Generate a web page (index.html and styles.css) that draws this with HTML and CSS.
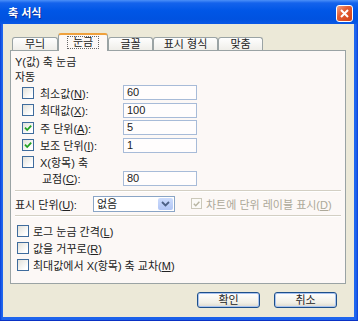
FILE: index.html
```html
<!DOCTYPE html>
<html lang="ko"><head>
<meta charset="utf-8">
<title>축 서식</title>
<link rel="stylesheet" href="styles.css">
</head><body>

<div class="window">
  <div class="titlebar">
    <span class="title">축 서식</span>
    <span class="close"><svg viewBox="0 0 15 15" width="15" height="15"><path d="M4 4 L11 11 M11 4 L4 11" stroke="#fff" stroke-width="2"/></svg></span>
  </div>

  <div class="client">
    <div class="tabs">
      <span class="tab t46">무늬</span>
      <span class="tab t50 sel"><span class="focus">눈금</span></span>
      <span class="tab t45">글꼴</span>
      <span class="tab t65">표시 형식</span>
      <span class="tab t45">맞춤</span>
    </div>

    <div class="panel">
      <div class="head">Y(값) 축 눈금</div>
      <div class="head h2">자동</div>

      <div class="row"><span class="cb"></span><label>최소값(<u>N</u>):</label><span class="edit">60</span></div>
      <div class="row"><span class="cb"></span><label>최대값(<u>X</u>):</label><span class="edit">100</span></div>
      <div class="row"><span class="cb"><svg viewBox="0 0 10 10" width="10" height="10"><path d="M2 4.6 L4.2 7 L8.2 2.6" fill="none" stroke="#21a121" stroke-width="1.8"/></svg></span><label>주 단위(<u>A</u>):</label><span class="edit">5</span></div>
      <div class="row"><span class="cb"><svg viewBox="0 0 10 10" width="10" height="10"><path d="M2 4.6 L4.2 7 L8.2 2.6" fill="none" stroke="#21a121" stroke-width="1.8"/></svg></span><label>보조 단위(<u>I</u>):</label><span class="edit">1</span></div>
      <div class="row xrow"><span class="cb"></span><label>X(항목) 축</label></div>
      <div class="row cross"><label>교점(<u>C</u>):</label><span class="edit">80</span></div>

      <div class="sep"></div>

      <div class="unitrow">
        <label>표시 단위(<u>U</u>):</label>
        <span class="select"><span class="value">없음</span><span class="drop"><svg viewBox="0 0 9 6" width="9" height="6"><path d="M1 1 L4.5 4.5 L8 1" fill="none" stroke="#4d6185" stroke-width="1.8"/></svg></span></span>
        <span class="cb dis"><svg viewBox="0 0 10 10" width="10" height="10"><path d="M2 4.6 L4.2 7 L8.2 2.6" fill="none" stroke="#b8b5a2" stroke-width="1.6"/></svg></span>
        <span class="distext">차트에 단위 레이블 표시(<u>D</u>)</span>
      </div>

      <div class="sep"></div>

      <div class="opt first"><span class="cb"></span><span>로그 눈금 간격(<u>L</u>)</span></div>
      <div class="opt"><span class="cb"></span><span>값을 거꾸로(<u>R</u>)</span></div>
      <div class="opt"><span class="cb"></span><span>최대값에서 X(항목) 축 교차(<u>M</u>)</span></div>
    </div>

    <div class="buttons">
      <span class="btn">확인</span>
      <span class="btn">취소</span>
    </div>
  </div>
</div>

</body></html>
```

FILE: styles.css
```css
* { box-sizing: border-box; }

body {
  margin: 0;
  font-family: "Liberation Sans", "Noto Sans CJK KR", sans-serif;
  font-size: 11px; color: #222;
  background: #fff;
}

u { text-decoration: underline; text-underline-offset: 1px; }

.window {
  width: 358px; height: 321px;
  display: flex; flex-direction: column;
  background: linear-gradient(to right, #0a3fd6, #1f66ee 2px, #1a5fe9 50%, #1f66ee calc(100% - 2px), #0a3fd6);
  border-bottom: 1px solid #0a32c4;
}

.titlebar {
  height: 24px; flex: none;
  display: flex; align-items: center;
  padding: 0 5px 0 8px;
  background: linear-gradient(#4c90f8 0, #1463ec 3px, #0056e6 45%, #0052e0 80%, #0a58e6 100%);
}

.title {
  flex: 1; color: #fff; font-weight: bold; font-size: 11px;
  text-shadow: 1px 1px #0b2d9e;
}

.close {
  width: 17px; height: 17px; margin-top: 2px;
  border: 1px solid #fff; border-radius: 3px;
  display: flex; align-items: center; justify-content: center;
  background: linear-gradient(135deg, #f3a286, #e35d33 40%, #cf4119);
}

.client {
  flex: 1;
  margin: 0 4px 3px 3px;
  background: #ece9d8;
  display: flex; flex-direction: column;
}

/* tab strip */
.tabs {
  height: 26px; flex: none;
  display: flex; align-items: flex-end;
  padding-left: 9px;
  position: relative; z-index: 1;
}

.tab {
  height: 13px;
  border: 1px solid #9aa3a4; border-bottom: none;
  border-radius: 3px 3px 0 0;
  background: linear-gradient(#fefefe, #efeee9);
  text-align: center; line-height: 12px;
  color: #222;
}

.t45 { width: 45px; }
.t46 { width: 46px; }
.t50 { width: 50px; }
.t65 { width: 65px; }

.tab.sel {
  height: 18px; margin-bottom: -1px;
  border-top: 2px solid #efa13c;
  background: #fcf8f6;
  padding-top: 1px;
}

.focus {
  display: inline-block;
  border: 1px dotted #666;
  padding: 0 5px; line-height: 11px;
}

/* page */
.panel {
  margin: 0 8px 0 7px;
  height: 234px; flex: none;
  border: 1px solid #9aa3a4;
  background: #fcf8f6;
  padding: 3px 4px 0 4px;
}

.head { line-height: 16px; height: 16px; }
.head.h2 { height: 14px; line-height: 14px; }

.row {
  display: flex; align-items: center;
  height: 17.5px; margin-left: 7px;
}

.row label { margin-left: 6px; width: 83px; }
.row.xrow { height: 15px; }
.row.cross { height: 18px; }
.row.cross label { margin-left: 20px; width: 81px; }

.edit {
  width: 74px; height: 15px;
  border: 1px solid #a7bbd8;
  background: #fffdfd;
  padding-left: 3px; line-height: 13px;
}

.cb {
  width: 12px; height: 12px; flex: none;
  border: 1px solid #3f6c9d;
  background: linear-gradient(135deg, #e2e1da, #fff 80%);
  display: flex; align-items: center; justify-content: center;
}

.cb.dis {
  width: 11px; height: 11px;
  border-color: #cbc8ba; background: #fbfaf7;
  margin-left: 16px;
}

.sep {
  height: 2px;
  border-top: 1px solid #d3cfc3;
  border-bottom: 1px solid #fff;
}

.row.cross + .sep { margin-top: 3px; }

.unitrow {
  display: flex; align-items: center;
  height: 23px;
}

.unitrow label { width: 78px; }

.select {
  width: 82px; height: 16px;
  border: 1px solid #8aa5c6;
  background: #fff;
  display: flex;
}

.select .value { flex: 1; padding-left: 3px; line-height: 14px; }

.drop {
  width: 15px; margin: 1px;
  border-radius: 2px;
  background: linear-gradient(#cddcfc, #b2c6f5);
  display: flex; align-items: center; justify-content: center;
}

.distext { margin-left: 4px; color: #aca899; }

.opt {
  display: flex; align-items: center; gap: 4px;
  height: 17px; margin-left: 2px;
}

.opt.first { margin-top: 5px; }

/* dialog buttons */
.buttons {
  display: flex; justify-content: flex-end; gap: 14px;
  padding: 8px 17px 0 0;
}

.btn {
  width: 63px; height: 16px;
  border: 1px solid #1d4f8a; border-radius: 3px;
  background: linear-gradient(#fff, #f1efe6 70%, #dcd8cc);
  box-shadow: inset 0 0 0 1px #a9c3f0;
  text-align: center; line-height: 14px;
}
```
